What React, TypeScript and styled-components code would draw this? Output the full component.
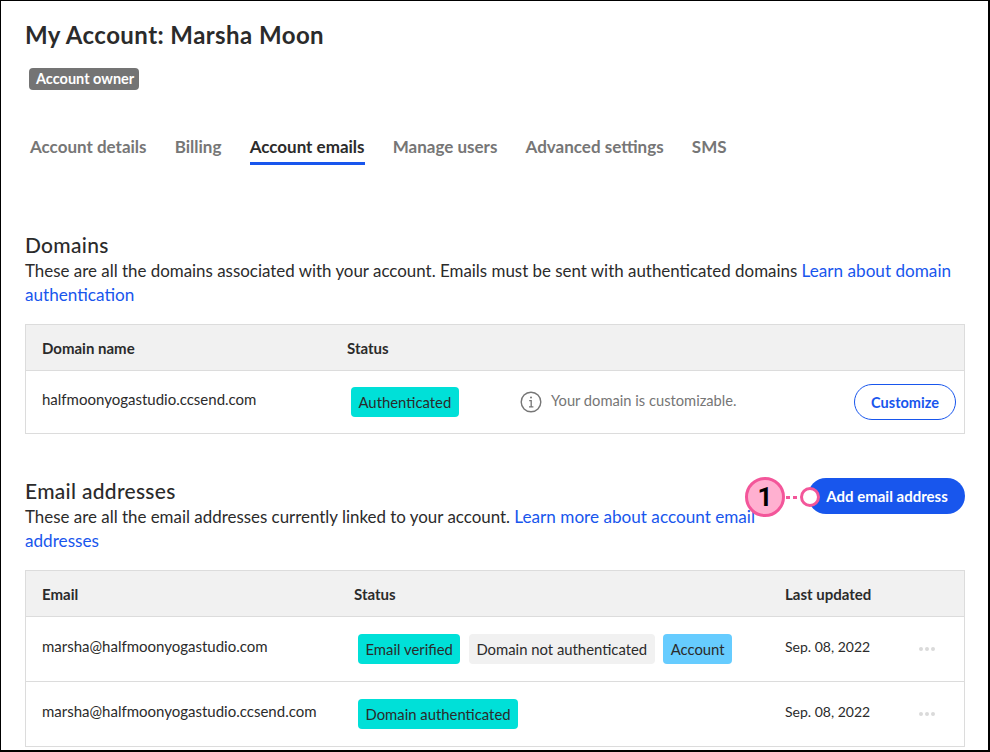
import React from "react";
import styled, { createGlobalStyle } from "styled-components";

const Global = createGlobalStyle`
  html, body { margin: 0; padding: 0; background: #fff; }
  body { font-family: "Lato", "Open Sans", sans-serif; color: #2b2b2b; }
  * { box-sizing: border-box; }
`;

const Frame = styled.div`
  position: relative;
  width: 990px;
  height: 752px;
  overflow: hidden;
  border: 1px solid #000;
  border-right-width: 2px;
  border-bottom-width: 2px;
  padding: 20px 23px 0 24px;
  background: #fff;
`;

const Title = styled.h1`
  margin: 0;
  font-size: 24px;
  line-height: 28px;
  font-weight: 700;
  letter-spacing: 0.43px;
  color: #2b2b2b;
`;

const OwnerBadge = styled.span`
  display: inline-block;
  margin: 19px 0 0 4px;
  height: 22px;
  width: 110px;
  padding: 0 7px;
  border-radius: 4px;
  background: #747474;
  color: #fff;
  font-size: 14.5px;
  font-weight: 700;
  line-height: 22px;
  white-space: nowrap;
  vertical-align: top;
`;

const Tabs = styled.nav`
  display: flex;
  gap: 28.2px;
  margin: 43px 0 0 5px;
`;

const Tab = styled.div<{ $active?: boolean }>`
  height: 32px;
  padding-top: 3px;
  font-size: 17px;
  line-height: 22px;
  font-weight: 700;
  color: ${(p) => (p.$active ? "#2b2b2b" : "#767676")};
  border-bottom: 3px solid ${(p) => (p.$active ? "#1856ed" : "transparent")};
`;

const Section = styled.section<{ $top: number }>`
  margin-top: ${(p) => p.$top}px;
`;

const SectionHead = styled.div`
  display: flex;
  justify-content: space-between;
  align-items: flex-start;
`;

const SectionIntro = styled.div`
  width: 745px;
`;

const Heading = styled.h2`
  margin: 0;
  font-size: 21px;
  line-height: 24px;
  font-weight: 500;
  letter-spacing: 0.3px;
  color: #2b2b2b;
`;

const Description = styled.p`
  margin: 2px 0 0;
  font-size: 16.92px;
  line-height: 24px;
  color: #2b2b2b;
`;

const Link = styled.a`
  font-size: 17.15px;
  color: #1856ed;
  text-decoration: none;
`;

const Table = styled.div`
  margin-top: 17px;
  width: 940px;
  border: 1px solid #dcdcdc;
  border-bottom: 0;
`;

const Row = styled.div<{ $cols: string; $head?: boolean; $height: number }>`
  display: grid;
  grid-template-columns: ${(p) => p.$cols};
  align-items: center;
  height: ${(p) => p.$height}px;
  padding-left: 16px;
  border-bottom: 1px solid #dcdcdc;
  background: ${(p) => (p.$head ? "#f1f1f1" : "#fff")};
`;

const HeadCell = styled.span`
  font-size: 15px;
  font-weight: 700;
`;

const Cell = styled.span`
  padding-bottom: 6px;
  font-size: 15px;
`;

const DateCell = styled(Cell)`
  font-size: 14px;
`;

const BadgeGroup = styled.div`
  display: flex;
  gap: 8.5px;
  padding-left: 4px;
`;

const Badge = styled.span<{ $color: string }>`
  display: inline-block;
  height: 30px;
  padding: 0 7.5px;
  border-radius: 4px;
  background: ${(p) => p.$color};
  font-size: 14.85px;
  line-height: 31px;
  color: #2b2b2b;
  white-space: nowrap;
`;

const Customizable = styled.div`
  display: flex;
  align-items: center;
  gap: 9px;
  color: #767676;
  font-size: 14.7px;
`;

const HintText = styled.span`
  padding-bottom: 4px;
`;

const GhostButton = styled.button`
  justify-self: end;
  margin-right: 8px;
  width: 102px;
  height: 36px;
  border-radius: 18px;
  border: 1px solid #1856ed;
  background: #fff;
  color: #1856ed;
  font: 700 14.5px "Lato", sans-serif;
`;

const PrimaryButton = styled.button`
  flex: none;
  margin-top: -1px;
  width: 157px;
  height: 36px;
  padding: 0 0 0 1px;
  border: 0;
  border-radius: 18px;
  background: #1856ed;
  color: #fff;
  font: 700 15px "Lato", sans-serif;
`;

const Dots = styled.div`
  display: flex;
  gap: 2px;
`;

const Dot = styled.i`
  width: 4px;
  height: 4px;
  border-radius: 50%;
  background: #dadada;
`;

const Callout = styled.div`
  position: absolute;
  left: 744px;
  top: 476px;
  display: flex;
  align-items: center;
`;

const CalloutNumber = styled.div`
  width: 40px;
  height: 40px;
  border-radius: 50%;
  border: 3px solid #f3569a;
  background: #ffb0d0;
  color: #000;
  font: 700 26px/34px "Roboto", sans-serif;
  text-align: center;
`;

const CalloutLine = styled.div`
  width: 11px;
  height: 3px;
  margin: 0 3px 0 1px;
  background: repeating-linear-gradient(90deg, #f3569a 0 4px, transparent 4px 7px);
`;

const CalloutDot = styled.div`
  width: 20px;
  height: 20px;
  border-radius: 50%;
  border: 3px solid #f3569a;
  background: #fff;
`;

const InfoIcon = () => (
  <svg width="22" height="22" viewBox="0 0 22 22" fill="none" stroke="#767676">
    <circle cx="11" cy="11" r="9.8" strokeWidth="1.4" />
    <circle cx="11" cy="6.6" r="1" fill="#767676" stroke="none" />
    <path d="M9.2 9.6H11.2V15.6M9 15.8H13.4" strokeWidth="1.3" />
  </svg>
);

const domainCols = "305px 173px 1fr 118px";
const emailCols = "312px 431px 134px 1fr";

const MoreDots = () => (
  <Dots>
    <Dot />
    <Dot />
    <Dot />
  </Dots>
);

export default function App() {
  return (
    <Frame>
      <Global />
      <Title>My Account: Marsha Moon</Title>
      <OwnerBadge>Account owner</OwnerBadge>
      <Tabs>
        <Tab>Account details</Tab>
        <Tab>Billing</Tab>
        <Tab $active>Account emails</Tab>
        <Tab>Manage users</Tab>
        <Tab>Advanced settings</Tab>
        <Tab>SMS</Tab>
      </Tabs>

      <Section $top={68}>
        <Heading>Domains</Heading>
        <Description>
          These are all the domains associated with your account. Emails must be sent with
          authenticated domains <Link>Learn about domain authentication</Link>
        </Description>
        <Table>
          <Row $head $cols={domainCols} $height={46}>
            <HeadCell>Domain name</HeadCell>
            <HeadCell>Status</HeadCell>
          </Row>
          <Row $cols={domainCols} $height={63}>
            <Cell>halfmoonyogastudio.ccsend.com</Cell>
            <BadgeGroup>
              <Badge $color="#00e0d8">Authenticated</Badge>
            </BadgeGroup>
            <Customizable>
              <InfoIcon />
              <HintText>Your domain is customizable.</HintText>
            </Customizable>
            <GhostButton>Customize</GhostButton>
          </Row>
        </Table>
      </Section>

      <Section $top={45}>
        <SectionHead>
          <SectionIntro>
            <Heading>Email addresses</Heading>
            <Description>
              These are all the email addresses currently linked to your account.{" "}
              <Link>Learn more about account email addresses</Link>
            </Description>
          </SectionIntro>
          <PrimaryButton>Add email address</PrimaryButton>
        </SectionHead>
        <Table>
          <Row $head $cols={emailCols} $height={46}>
            <HeadCell>Email</HeadCell>
            <HeadCell>Status</HeadCell>
            <HeadCell>Last updated</HeadCell>
          </Row>
          <Row $cols={emailCols} $height={65}>
            <Cell>marsha@halfmoonyogastudio.com</Cell>
            <BadgeGroup>
              <Badge $color="#00e0d8">Email verified</Badge>
              <Badge $color="#f1f1f1">Domain not authenticated</Badge>
              <Badge $color="#66ccff">Account</Badge>
            </BadgeGroup>
            <DateCell>Sep. 08, 2022</DateCell>
            <MoreDots />
          </Row>
          <Row $cols={emailCols} $height={65}>
            <Cell>marsha@halfmoonyogastudio.ccsend.com</Cell>
            <BadgeGroup>
              <Badge $color="#00e0d8">Domain authenticated</Badge>
            </BadgeGroup>
            <DateCell>Sep. 08, 2022</DateCell>
            <MoreDots />
          </Row>
        </Table>
      </Section>

      <Callout>
        <CalloutNumber>1</CalloutNumber>
        <CalloutLine />
        <CalloutDot />
      </Callout>
    </Frame>
  );
}
